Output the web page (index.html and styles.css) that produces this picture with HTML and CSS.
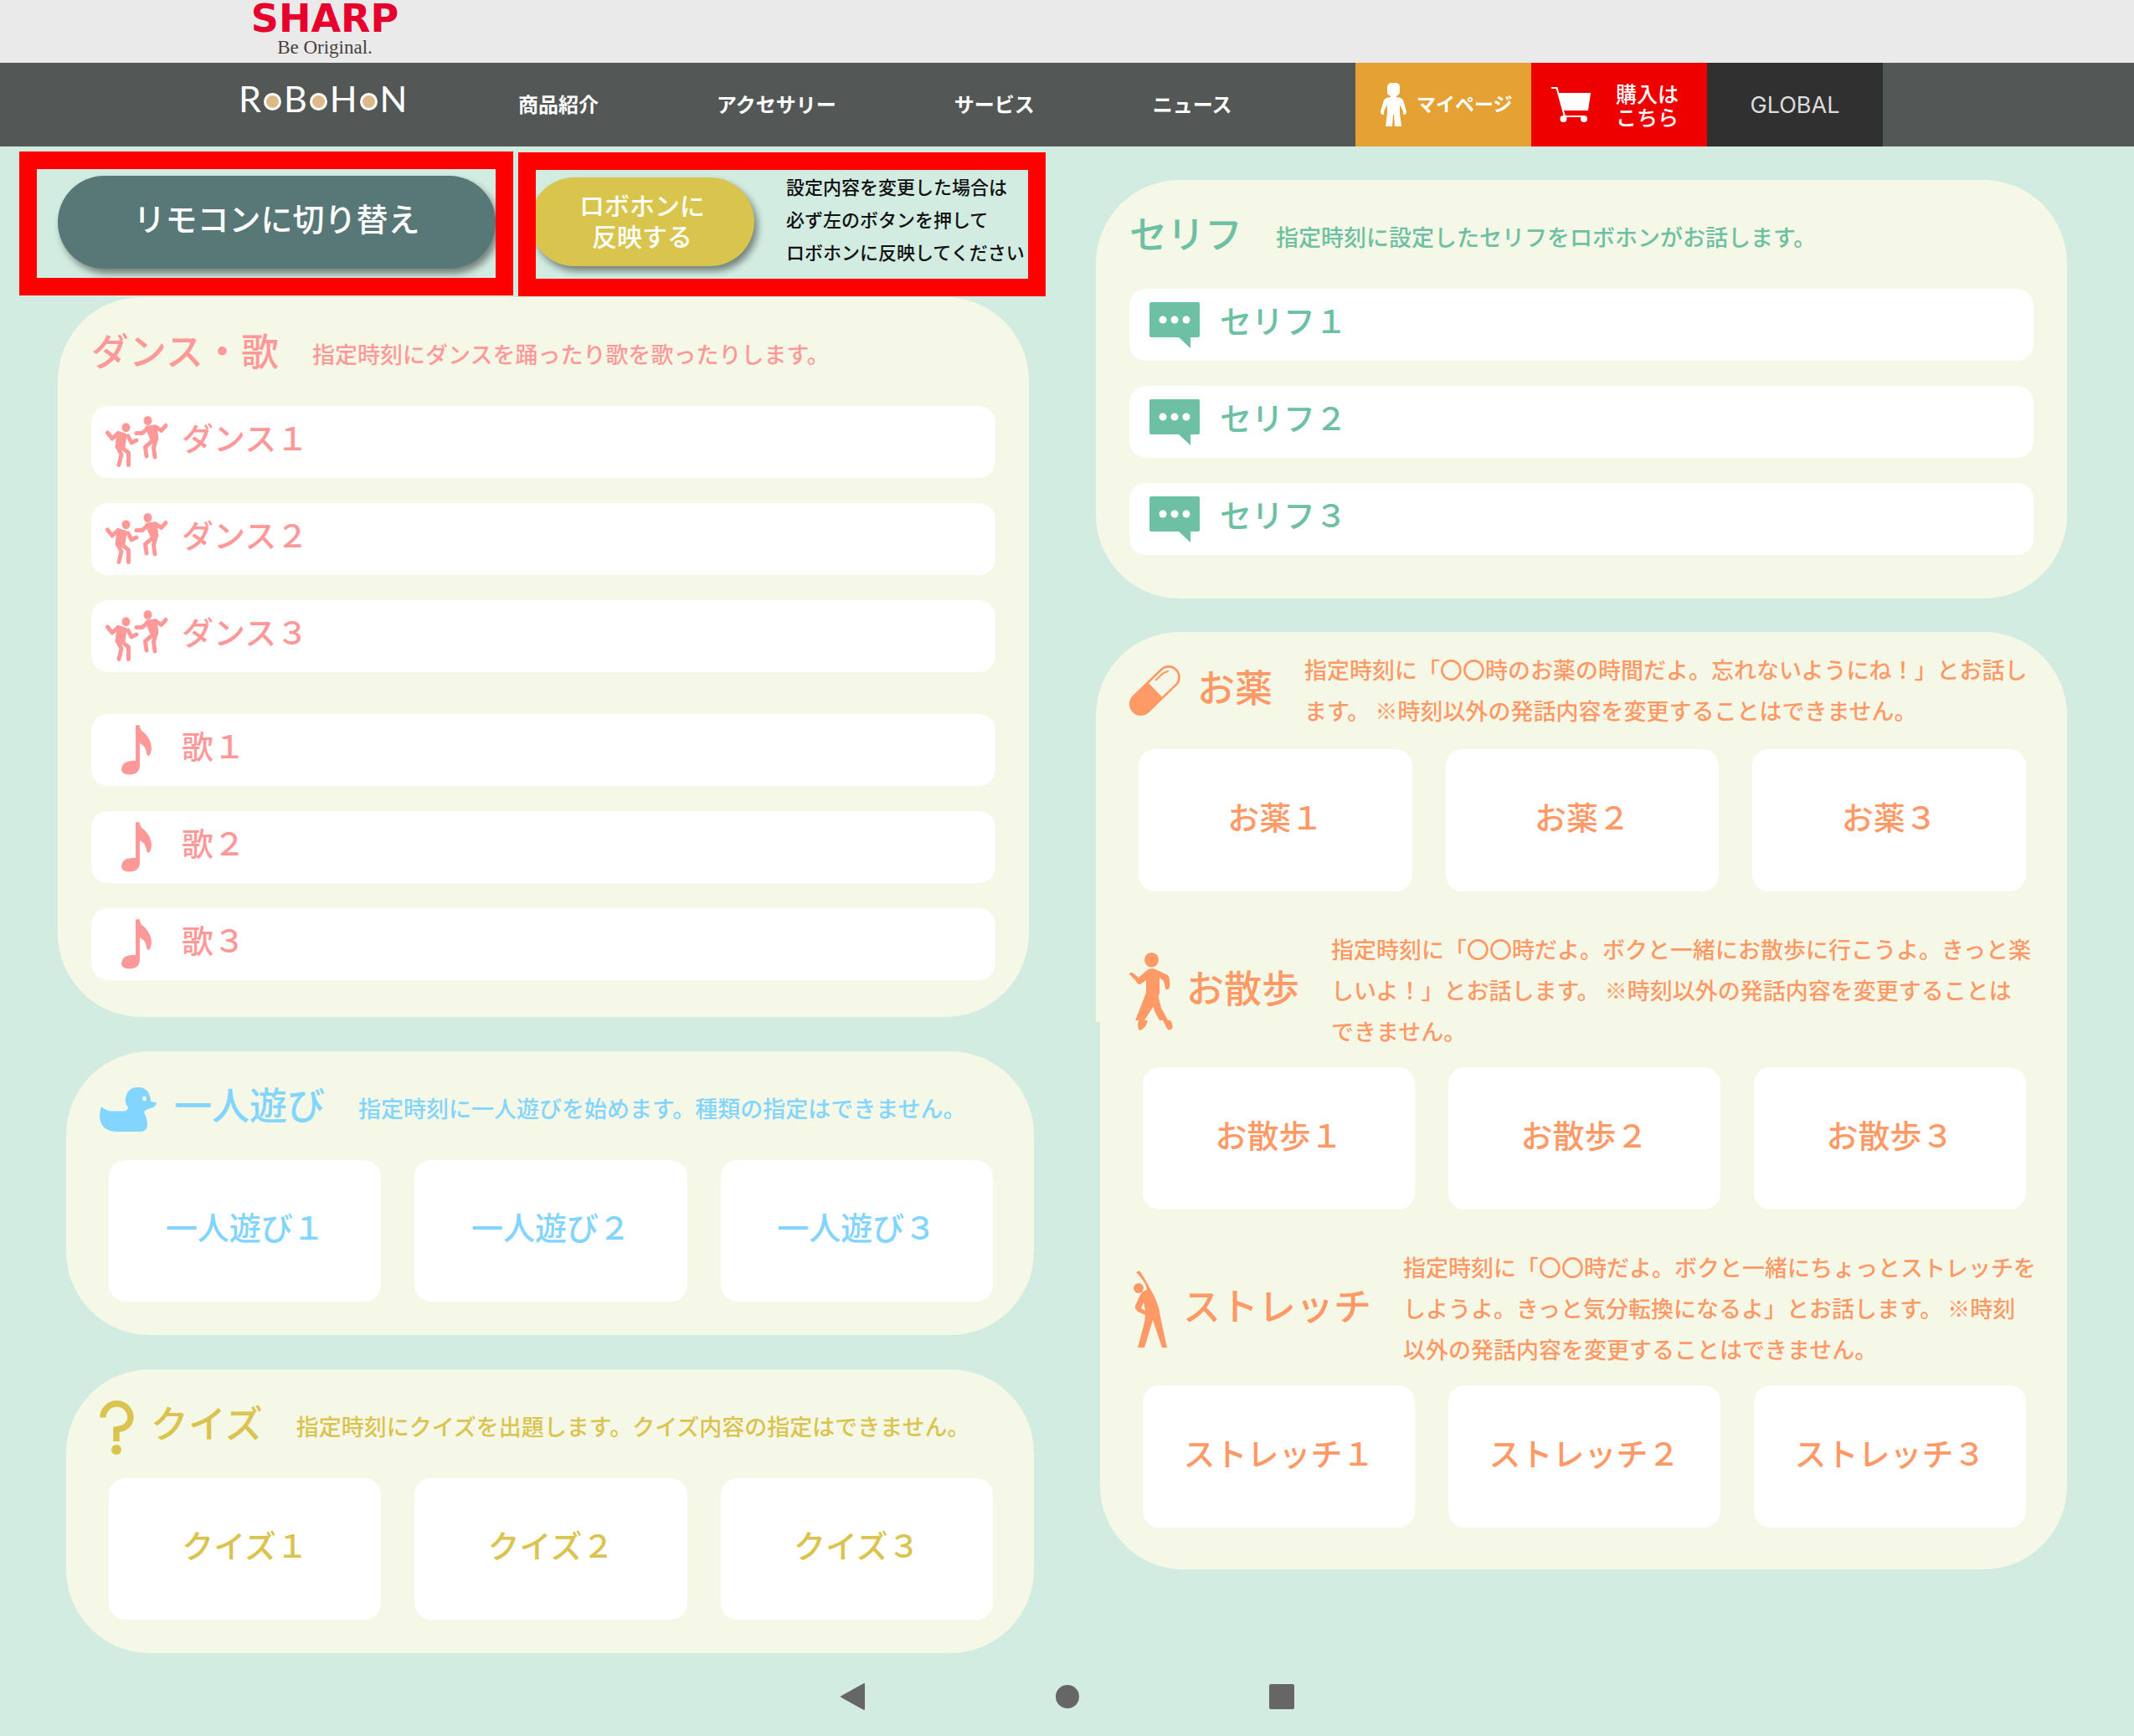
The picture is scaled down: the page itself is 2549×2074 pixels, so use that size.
FILE: index.html
```html
<!DOCTYPE html>
<html lang="ja">
<head>
<meta charset="utf-8">
<meta name="viewport" content="width=device-width, initial-scale=1">
<title>RoBoHoN</title>
<link rel="stylesheet" href="styles.css">
</head>
<body>
<svg class="sprite" aria-hidden="true">
  <symbol id="i-dance" viewBox="0 0 75 62">
    <g fill="currentColor" stroke="currentColor" stroke-width="5" stroke-linecap="round" stroke-linejoin="round">
      <ellipse cx="24.500" cy="13.700" rx="5" ry="5.500" stroke="none"/>
      <path d="M2.500 20L8 27L15 20.500M27 24L31 32L37 29M15 38L19 46L16 58.500M20 38L27.500 44V58.500" fill="none"/>
      <path d="M16 21L23 23L21 37L14 37Z"/>
      <ellipse cx="50.500" cy="5.500" rx="5" ry="5.500" stroke="none"/>
      <path d="M37 20.500H44L50 15M60 13L66.500 17.500L72 11.500M57 29L47.500 37L49 48M60 29L57.500 38L59 49" fill="none"/>
      <path d="M50 14L59 13L61 27L56 28Z"/>
    </g>
  </symbol>
  <symbol id="i-note" viewBox="0 0 36 60">
    <path fill="currentColor" d="M17 1Q19.500-1 22 1Q22 6 27 9Q36 18 36 28Q35 37 32 37Q30 36 29.500 31Q28 25 22 22V50Q21 59 10 59.500Q0 59 0 53Q1 43 13 43H17Z"/>
  </symbol>
  <symbol id="i-bubble" viewBox="0 0 60 55">
    <path fill="currentColor" fill-rule="evenodd" d="M2 0H58Q60 0 60 2V40Q60 42 58 42H49V55L35 42H2Q0 42 0 40V2Q0 0 2 0Z"/>
    <g fill="#fff"><circle cx="16" cy="21" r="4.500"/><circle cx="30" cy="21" r="4.500"/><circle cx="44" cy="21" r="4.500"/></g>
  </symbol>
</svg>

<header>
  <div class="brandbar">
    <a class="sharp" href="#"><strong>SHARP</strong><span>Be Original.</span></a>
  </div>
  <div class="navbar">
    <a class="robohon" href="#">R<i></i>B<i></i>H<i></i>N</a>
    <nav class="menu">
      <a href="#">商品紹介</a>
      <a href="#">アクセサリー</a>
      <a href="#">サービス</a>
      <a href="#">ニュース</a>
    </nav>
    <div class="shortcuts">
      <a class="mypage" href="#">
        <svg width="31" height="52" viewBox="0 0 31 52" aria-hidden="true"><path fill="currentColor" d="M12 0H19Q23 1 23 5V11Q22 15 19 15.500V17Q27 17 28 24L31 34Q31 38 28 38Q26 37 27 34L23 26V36L25 52H17L16 38H15L14 52H6L8 36V26L4 34Q5 37 3 38Q0 38 0 34L3 24Q4 17 12 17V15.500Q8 15 8 11V5Q8 1 12 0Z"/></svg>
        <span>マイページ</span>
      </a>
      <a class="buy" href="#">
        <svg width="47" height="42" viewBox="0 0 47 42" aria-hidden="true"><path fill="none" stroke="currentColor" stroke-width="2" d="M0 1H6.500L16 35H38M16 34L13 38"/><path fill="currentColor" d="M8 7H47L44 28H14Z"/><circle cx="14.500" cy="38" r="4" fill="currentColor"/><circle cx="39" cy="38" r="4" fill="currentColor"/></svg>
        <span>購入は<br>こちら</span>
      </a>
      <a class="global" href="#">GLOBAL</a>
    </div>
  </div>
</header>

<main class="board">
  <div class="column">
    <div class="actions">
      <button class="pill switch">リモコンに切り替え</button>
      <button class="pill apply">ロボホンに<br>反映する</button>
      <p class="hint">設定内容を変更した場合は<br>必ず左のボタンを押して<br>ロボホンに反映してください</p>
      <span class="marker marker-switch"></span>
      <span class="marker marker-apply"></span>
    </div>

    <section class="panel pink">
      <div class="heading"><h2>ダンス・歌</h2><p>指定時刻にダンスを踊ったり歌を歌ったりします。</p></div>
      <div class="rows">
        <button class="row"><span class="slot"><svg width="75" height="62"><use href="#i-dance"/></svg></span><span class="label">ダンス１</span></button>
        <button class="row"><span class="slot"><svg width="75" height="62"><use href="#i-dance"/></svg></span><span class="label">ダンス２</span></button>
        <button class="row"><span class="slot"><svg width="75" height="62"><use href="#i-dance"/></svg></span><span class="label">ダンス３</span></button>
      </div>
      <div class="rows">
        <button class="row"><span class="slot"><svg width="36" height="60"><use href="#i-note"/></svg></span><span class="label">歌１</span></button>
        <button class="row"><span class="slot"><svg width="36" height="60"><use href="#i-note"/></svg></span><span class="label">歌２</span></button>
        <button class="row"><span class="slot"><svg width="36" height="60"><use href="#i-note"/></svg></span><span class="label">歌３</span></button>
      </div>
    </section>

    <section class="panel offset blue">
      <div class="heading">
        <svg width="69" height="61" viewBox="0 -8 69 61" aria-hidden="true"><path fill="currentColor" fill-rule="evenodd" d="M2 23Q8 29 17 28.500H28Q34 28 34 24Q30 19 31 13Q33 0 46 0Q60 0 61 17Q64 18 68 18Q67 24 61 25Q54 27 53 30Q57 37 57 45Q56 53 49 53H20Q0 52 0 33Q1 26 2 23ZM53.500 10.500a2.500 3 0 1 0 .1 0Z"/></svg>
        <h2>一人遊び</h2><p>指定時刻に一人遊びを始めます。種類の指定はできません。</p>
      </div>
      <div class="cards"><button>一人遊び１</button><button>一人遊び２</button><button>一人遊び３</button></div>
    </section>

    <section class="panel offset yellow">
      <div class="heading">
        <svg width="41" height="73" viewBox="0 -8 41 73" aria-hidden="true"><path fill="none" stroke="currentColor" stroke-width="7.500" d="M4 20.500A16.500 16.500 0 0 1 37 20.500Q36 33 20 35V49"/><circle cx="20" cy="59" r="6" fill="currentColor"/></svg>
        <h2>クイズ</h2><p>指定時刻にクイズを出題します。クイズ内容の指定はできません。</p>
      </div>
      <div class="cards"><button>クイズ１</button><button>クイズ２</button><button>クイズ３</button></div>
    </section>
  </div>

  <div class="column right">
    <section class="panel speech green">
      <div class="heading"><h2>セリフ</h2><p>指定時刻に設定したセリフをロボホンがお話します。</p></div>
      <div class="rows">
        <button class="row"><span class="slot"><svg width="60" height="55"><use href="#i-bubble"/></svg></span><span class="label">セリフ１</span></button>
        <button class="row"><span class="slot"><svg width="60" height="55"><use href="#i-bubble"/></svg></span><span class="label">セリフ２</span></button>
        <button class="row"><span class="slot"><svg width="60" height="55"><use href="#i-bubble"/></svg></span><span class="label">セリフ３</span></button>
      </div>
    </section>

    <section class="panel care orange">
      <div class="upper">
        <div class="heading medicine">
          <svg width="61" height="60" viewBox="0 0 61 60" aria-hidden="true"><g transform="translate(30.300 30) rotate(-44)"><rect x="-37" y="-14" width="74" height="28" rx="14" fill="currentColor"/><path d="M1-11.300H23a11.300 11.300 0 0 1 0 22.600H1Z" fill="#f5f8e6"/><path d="M9-8H21Q26-7 28-5" fill="none" stroke="currentColor" stroke-width="2"/></g></svg>
          <h2>お薬</h2><p>指定時刻に「〇〇時のお薬の時間だよ。忘れないようにね！」とお話し<br>ます。 ※時刻以外の発話内容を変更することはできません。</p>
        </div>
        <div class="cards"><button>お薬１</button><button>お薬２</button><button>お薬３</button></div>
        <div class="heading tall">
          <svg width="52" height="93" viewBox="0 0 52 93" aria-hidden="true"><g fill="currentColor"><ellipse cx="26.500" cy="8.800" rx="8.500" ry="8.800"/><path d="M20 22Q25 17 31 20L46 27Q49 30 48 42Q46 46 43 43L41 34L36 30V49L30 62L18 81H22Q20 91 12 93Q9 90 11 81H7L13 66L20 48V33L13 38Q9 38 8 34L0 26Q1 22 5 25L11 30Z"/><path d="M34.500 52L38 66L46 81H49Q53 87 51 91Q48 94 45 91L40 81H36Q28 68 28 62Z"/></g></svg>
          <h2>お散歩</h2><p>指定時刻に「〇〇時だよ。ボクと一緒にお散歩に行こうよ。きっと楽<br>しいよ！」とお話します。 ※時刻以外の発話内容を変更することは<br>できません。</p>
        </div>
      </div>
      <div class="cards"><button>お散歩１</button><button>お散歩２</button><button>お散歩３</button></div>
      <div class="heading tall">
        <svg width="43" height="92" viewBox="0 0 43 92" aria-hidden="true"><g fill="currentColor"><ellipse cx="6" cy="21" rx="6" ry="6"/><path fill-rule="evenodd" d="M3 2L7 0Q14 10 20 22Q30 38 32 55L40 92H34L23 59L13 92H5L13 62L14 53L5 49Q1 46 2 42L7 31Q10 24 16 23Q15 14 3 2ZM12 38L9 45L14 48Z"/></g></svg>
        <h2>ストレッチ</h2><p>指定時刻に「〇〇時だよ。ボクと一緒にちょっとストレッチを<br>しようよ。きっと気分転換になるよ」とお話します。 ※時刻<br>以外の発話内容を変更することはできません。</p>
      </div>
      <div class="cards"><button>ストレッチ１</button><button>ストレッチ２</button><button>ストレッチ３</button></div>
    </section>
  </div>
</main>

<footer class="system">
  <button aria-label="戻る"><svg width="32" height="32" viewBox="0 0 32 32"><path d="M29 1V31L2 16Z" fill="currentColor" stroke="currentColor" stroke-width="2" stroke-linejoin="round"/></svg></button>
  <button aria-label="ホーム"><svg width="32" height="32" viewBox="0 0 32 32"><circle cx="16" cy="16" r="14" fill="currentColor"/></svg></button>
  <button aria-label="履歴"><svg width="32" height="32" viewBox="0 0 32 32"><rect x="1" y="1" width="30" height="30" rx="2" fill="currentColor"/></svg></button>
</footer>
</body>
</html>
```

FILE: styles.css
```css
* { box-sizing: border-box; }

body {
  margin: 0;
  background: #d2ece2;
  color: #111;
  font-family: "Noto Sans CJK JP", sans-serif;
  font-weight: 500;
}

h2, p { margin: 0; }
a { color: inherit; text-decoration: none; }
button {
  border: 0;
  padding: 0;
  font: inherit;
  color: inherit;
  cursor: pointer;
}
svg { display: block; flex: none; }
.sprite { position: absolute; width: 0; height: 0; }

/* header */
.brandbar {
  height: 75px;
  padding: 0 289px;
  display: flex;
  background: #eaeaea;
}
.sharp {
  display: flex;
  flex-direction: column;
  align-items: center;
  width: 198px;
}
.sharp strong {
  font: 700 46px/44px "DejaVu Sans", sans-serif;
  color: #e6002d;
}
.sharp span {
  font: 23px/26px "Liberation Serif", serif;
  color: #483f3d;
}
.navbar {
  height: 100px;
  padding: 0 300px 0 285px;
  display: flex;
  align-items: center;
  background: #535755;
  color: #fff;
}
.robohon {
  display: flex;
  align-items: flex-end;
  gap: 3px;
  width: 334px;
  padding-bottom: 14px;
  font: 400 43px/44px Lato, sans-serif;
}
.robohon i {
  width: 21px;
  height: 21px;
  margin-bottom: 8px;
  border: 3px solid #fff;
  border-radius: 50%;
  background: #ddb98a;
}
.menu {
  display: flex;
  gap: 141px;
  padding-bottom: 4px;
  font-size: 24px;
  font-weight: 700;
}
.shortcuts {
  display: flex;
  align-self: stretch;
  margin-left: auto;
}
.shortcuts a {
  width: 210px;
  display: flex;
  align-items: center;
}
.mypage {
  gap: 12px;
  padding-left: 30px;
  background: #e5a133;
  font-size: 23px;
  font-weight: 700;
}
.mypage span { padding-bottom: 4px; }
.buy {
  gap: 30px;
  padding-left: 24px;
  background: #ee0000;
  font-size: 25px;
  line-height: 28px;
}
.global {
  justify-content: center;
  background: #303030;
  color: #ddd;
  font: 27px Inter, sans-serif;
}

/* board */
.board {
  display: grid;
  grid-template-columns: 1fr 1fr;
  gap: 80px;
  padding: 0 80px 0 69px;
}
.column {
  min-width: 0;
  display: flex;
  flex-direction: column;
  gap: 41px;
}
.right {
  gap: 40px;
  padding-top: 40px;
}

.actions {
  position: relative;
  display: flex;
  align-items: center;
  height: 180px;
  margin-bottom: -41px;
}
.pill {
  flex: none;
  border-radius: 56px;
  color: #fff;
  box-shadow: 4px 6px 8px rgba(0, 0, 0, .45);
}
.switch {
  width: 523px;
  height: 111px;
  padding-bottom: 12px;
  background: #587878;
  font-size: 38px;
}
.apply {
  width: 268px;
  height: 106px;
  margin-left: 41px;
  padding-bottom: 4px;
  background: #d9c54d;
  font-size: 30px;
  line-height: 37px;
}
.hint {
  margin-left: 38px;
  padding-bottom: 8px;
  font-size: 22px;
  line-height: 39px;
  white-space: nowrap;
}
.marker {
  position: absolute;
  height: 172px;
  border: 21px solid #f00;
  pointer-events: none;
}
.marker-switch { top: 6px; left: -46px; width: 590px; }
.marker-apply { top: 7px; left: 550px; width: 630px; }

/* panels */
.panel {
  padding: 0 40px 40px;
  border-radius: 100px;
  background: #f5f8e6;
}
.offset { margin: 0 -6px 0 10px; }
.pink { color: #ff9999; padding-bottom: 44px; }
.blue { color: #82d5ff; }
.yellow { color: #dac44f; }
.green { color: #6dc0a3; }
.orange { color: #ff9966; }
.speech { padding-bottom: 52px; }

.heading {
  display: flex;
  align-items: center;
  height: 130px;
}
.heading svg { margin-right: 20px; }
.heading h2 {
  flex: none;
  margin-right: 40px;
  padding-bottom: 4px;
  font-size: 45px;
  font-weight: 500;
  line-height: 54px;
}
.heading p {
  padding-top: 4px;
  font-size: 27px;
  line-height: 49px;
  white-space: nowrap;
}
.medicine { height: 140px; }
.medicine h2, .tall h2 {
  margin-right: 38px;
  padding-bottom: 10px;
}
.medicine p, .tall p {
  padding: 0 0 3px;
}
.tall { height: 210px; padding-top: 28px; }
.tall svg { margin-right: 16px; }

.rows {
  display: flex;
  flex-direction: column;
  gap: 30px;
}
.rows + .rows { margin-top: 50px; }
.row {
  display: flex;
  align-items: center;
  height: 86px;
  border-radius: 20px;
  background: #fff;
}
.slot {
  width: 108px;
  display: flex;
  justify-content: center;
}
.label {
  font-size: 38px;
  line-height: 48px;
  padding-bottom: 12px;
}
.cards {
  display: grid;
  grid-template-columns: repeat(3, 1fr);
  gap: 40px;
  padding: 0 9px 0 11px;
}
.cards button {
  height: 169px;
  padding-bottom: 12px;
  border-radius: 20px;
  background: #fff;
  font-size: 38px;
}

/* the upper part of this panel is slightly wider than the lower one */
.care {
  position: relative;
  isolation: isolate;
  margin-left: 5px;
  padding-bottom: 50px;
}
.care::before {
  content: "";
  position: absolute;
  z-index: -1;
  inset: 0 0 auto -5px;
  height: 466px;
  border-radius: 100px 100px 0 0;
  background: #f5f8e6;
}
.upper { margin-left: -5px; }
.care .cards button { height: 170px; }

/* system bar */
.system {
  display: flex;
  justify-content: center;
  gap: 224px;
  padding: 36px 0 30px;
  color: #666;
}
.system button { background: none; color: inherit; }
```
